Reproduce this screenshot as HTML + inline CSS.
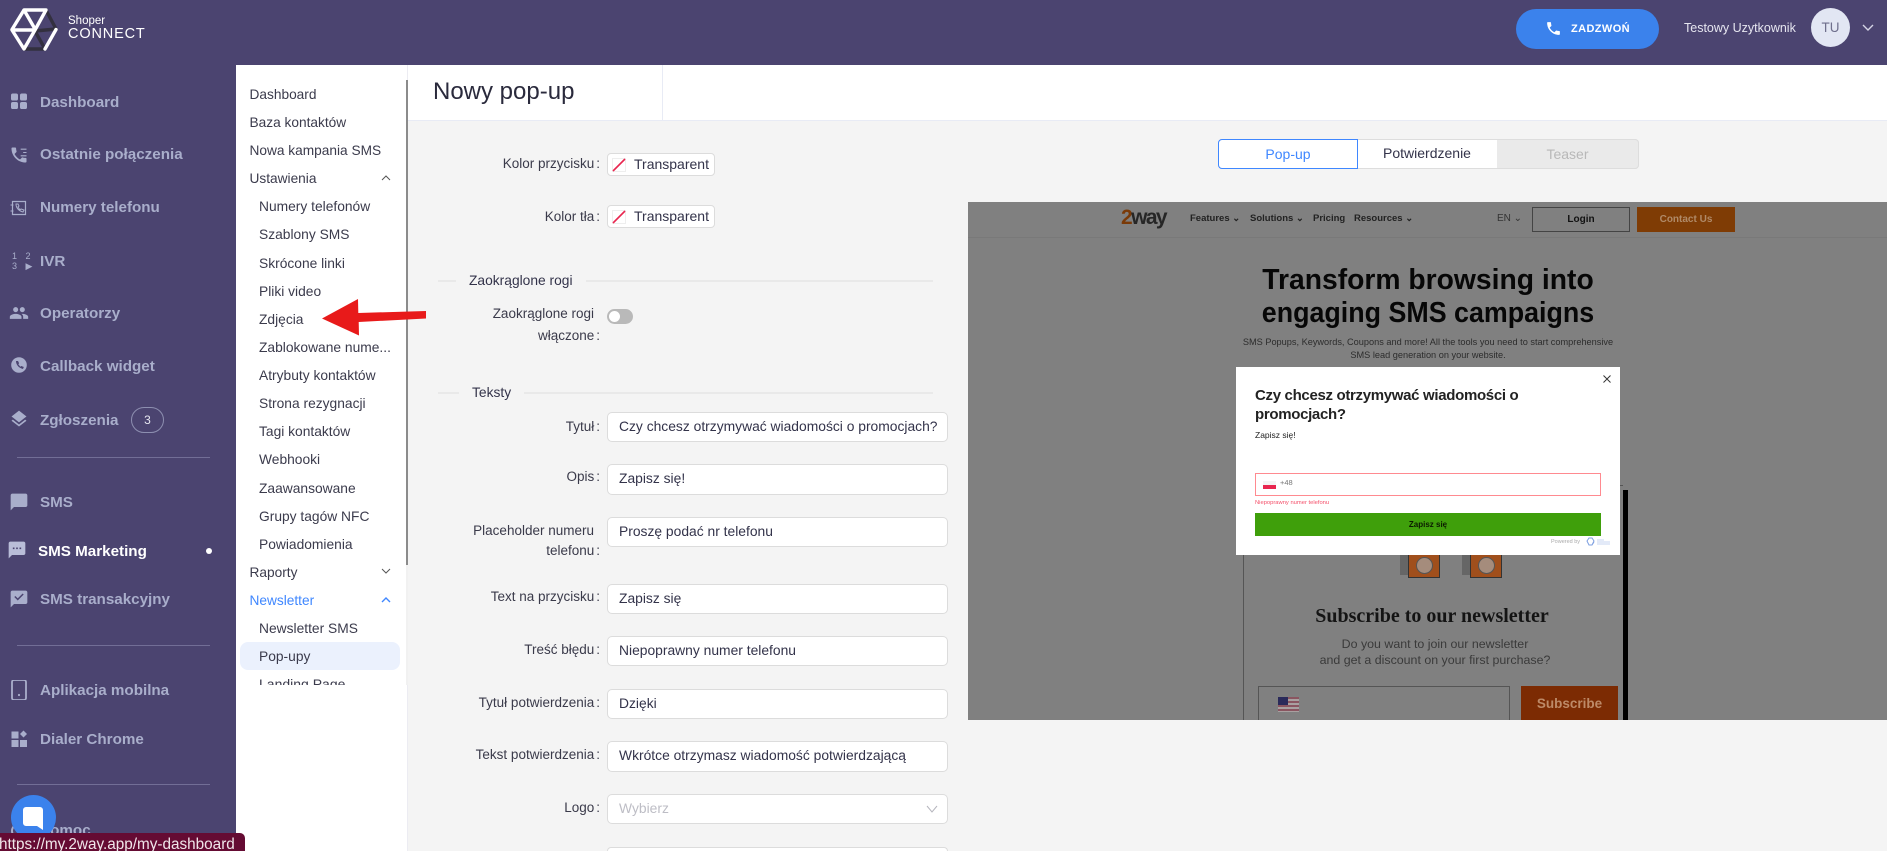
<!DOCTYPE html>
<html lang="pl"><head><meta charset="utf-8"><title>Nowy pop-up</title>
<style>
*{box-sizing:border-box}
html,body{margin:0;padding:0;width:1887px;height:851px;overflow:hidden}
body{position:relative;background:#f4f4f4;font-family:"Liberation Sans",Arial,sans-serif;color:#33334a}
.a,.t,.n,.m,.s,.l,.i,.p,svg{position:absolute}
.t{line-height:20px;height:20px;white-space:nowrap}
.n{left:40px;line-height:20px;height:20px;font-size:15.2px;font-weight:700;color:#a9aecb;white-space:nowrap}
.ic{left:9px;width:20px;height:20px;fill:#a9aecb}
.m{left:249.5px;line-height:20px;height:20px;font-size:13.7px;color:#3b3b4c;white-space:nowrap;margin-top:1px}
.s{left:259px;line-height:20px;height:20px;font-size:13.8px;color:#3b3b4c;white-space:nowrap;margin-top:1px}
.l{right:1287px;line-height:20px;height:20px;font-size:13.5px;color:#3a3a4a;white-space:nowrap;text-align:right;margin-top:1px}
.l b{font-weight:400;margin-left:2px}
.i{left:607px;width:341px;background:#fff;border:1px solid #dcdcdc;border-radius:5px;font-size:13.85px;line-height:27px;padding-left:11px;color:#33334a;white-space:nowrap}
.p{left:607px;width:108px;height:23px;background:#fff;border:1px solid #dcdcdc;border-radius:4px;font-size:14px;line-height:21px;padding-left:26px;color:#33334a}
.d{position:absolute;height:2px;background:#e9e9e9}
.g{position:absolute;white-space:nowrap;line-height:1;text-align:center}
</style></head><body>

<!-- preview -->
<div class="a" style="left:968px;top:202px;width:919px;height:518px;background:#808080;overflow:hidden"></div>
<div class="a" style="left:968px;top:237px;width:919px;height:1px;background:#797979"></div>
<div class="t" style="left:1121px;top:208px;font-size:21px;font-weight:700;color:#262626;letter-spacing:-1.6px"><span style="color:#7a3a08">2</span>way</div>
<div class="t" style="left:1190px;top:209px;font-size:9.5px;font-weight:700;color:#222">Features ⌄</div>
<div class="t" style="left:1250px;top:209px;font-size:9.5px;font-weight:700;color:#222">Solutions ⌄</div>
<div class="t" style="left:1313px;top:209px;font-size:9.5px;font-weight:700;color:#222">Pricing</div>
<div class="t" style="left:1354px;top:209px;font-size:9.5px;font-weight:700;color:#222">Resources ⌄</div>
<div class="t" style="left:1497px;top:209px;font-size:10px;color:#333">EN ⌄</div>
<div class="a" style="left:1532px;top:207px;width:98px;height:25px;border:1px solid #444;font-size:10px;font-weight:700;color:#111;text-align:center;line-height:23px">Login</div>
<div class="a" style="left:1637px;top:207px;width:98px;height:25px;background:#7f3c05;font-size:10px;font-weight:700;color:#b08a68;text-align:center;line-height:25px">Contact Us</div>
<div class="g" style="left:1228px;width:400px;top:266px;font-size:29px;font-weight:700;color:#070707;transform:scaleX(.975)">Transform browsing into</div>
<div class="g" style="left:1228px;width:400px;top:299px;font-size:29px;font-weight:700;color:#070707;transform:scaleX(.925)">engaging SMS campaigns</div>
<div class="g" style="left:1228px;width:400px;top:338px;font-size:9.2px;color:#2c2c2c">SMS Popups, Keywords, Coupons and more! All the tools you need to start comprehensive</div>
<div class="g" style="left:1228px;width:400px;top:351px;font-size:9.2px;color:#2c2c2c">SMS lead generation on your website.</div>

<div class="a" style="left:1243px;top:485px;width:380px;height:235px;border:1px solid #555;border-width:1px 0 0 1px"></div>
<div class="a" style="left:1623px;top:490px;width:5px;height:230px;background:#000"></div>
<div class="a" style="left:1400px;top:550px;width:9px;height:25px;background:#666"></div>
<div class="a" style="left:1408px;top:550px;width:32px;height:28px;background:#a04f1c;border:1px solid #333"></div>
<div class="a" style="left:1416px;top:557px;width:17px;height:17px;border-radius:50%;background:#a58c7c;border:1px solid #555"></div>
<div class="a" style="left:1462px;top:550px;width:9px;height:25px;background:#666"></div>
<div class="a" style="left:1470px;top:550px;width:32px;height:28px;background:#a04f1c;border:1px solid #333"></div>
<div class="a" style="left:1478px;top:557px;width:17px;height:17px;border-radius:50%;background:#a58c7c;border:1px solid #555"></div>
<div class="g" style="left:1282px;width:300px;top:606px;font-size:20px;font-weight:700;color:#141414;font-family:'Liberation Serif',serif">Subscribe to our newsletter</div>
<div class="g" style="left:1285px;width:300px;top:638px;font-size:12.4px;color:#3a3a3a">Do you want to join our newsletter</div>
<div class="g" style="left:1285px;width:300px;top:654px;font-size:12.4px;color:#3a3a3a">and get a discount on your first purchase?</div>
<div class="a" style="left:1258px;top:686px;width:252px;height:34px;border:1px solid #555;border-bottom:0"></div>
<div class="a" style="left:1278px;top:697px;width:21px;height:15px;background:repeating-linear-gradient(#8a5560 0 2px,#a8a0a0 2px 4px)"></div>
<div class="a" style="left:1278px;top:697px;width:10px;height:8px;background:#2a2a5a"></div>
<div class="a" style="left:1521px;top:686px;width:97px;height:34px;background:#7c2b03;color:#bd8a68;font-size:13.5px;font-weight:700;text-align:center;line-height:36px">Subscribe</div>

<!-- popup -->
<div class="a" style="left:1236px;top:367px;width:384px;height:188px;background:#fff"></div>
<svg style="left:1601px;top:373px" width="12" height="12" viewBox="0 0 12 12"><path d="M2.500 2.500l7 7M9.500 2.500l-7 7" stroke="#333" stroke-width="1" fill="none"/></svg>
<div class="t" style="left:1255px;top:386px;font-size:15px;font-weight:700;color:#222;letter-spacing:-.32px">Czy chcesz otrzymywać wiadomości o</div>
<div class="t" style="left:1255px;top:405px;font-size:15px;font-weight:700;color:#222;letter-spacing:-.32px">promocjach?</div>
<div class="t" style="left:1255px;top:425px;font-size:8.5px;color:#222">Zapisz się!</div>
<div class="a" style="left:1255px;top:473px;width:346px;height:23px;border:1px solid #ff8a90;background:#fff"></div>
<div class="a" style="left:1263px;top:481px;width:13px;height:4px;background:#f4f4f4"></div>
<div class="a" style="left:1263px;top:485px;width:13px;height:4px;background:#e8264f"></div>
<div class="t" style="left:1280px;top:473px;font-size:7.5px;color:#777">+48</div>
<div class="t" style="left:1255px;top:493px;font-size:5.8px;color:#f4506a">Niepoprawny numer telefonu</div>
<div class="a" style="left:1255px;top:513px;width:346px;height:23px;background:#3f9f0b;font-size:8px;font-weight:700;color:#0b1a00;text-align:center;line-height:23px">Zapisz się</div>
<div class="t" style="left:1551px;top:532px;font-size:5.5px;color:#aaa">Powered by</div>
<svg style="left:1586px;top:537px" width="26" height="10" viewBox="0 0 26 10"><path d="M1 4l2-3h3l2 3-2 4H3zM6 8l2-3" stroke="#7d9fe0" fill="none"/><path d="M11 3h7M11 5h13M11 7h13" stroke="#b5c8ee" stroke-width=".8"/></svg>

<!-- form -->
<div class="a" style="left:408px;top:65px;width:1479px;height:56px;background:#fff;border-bottom:1px solid #e8ebf5"></div>
<div class="a" style="left:662px;top:65px;width:1px;height:55px;background:#e8ebf5"></div>
<div class="t" style="left:433px;top:82px;font-size:24px;color:#2a2a3c">Nowy pop-up</div>

<div class="a" style="left:1218px;top:139px;width:421px;height:30px;background:#fff;border:1px solid #ddd;border-radius:4px"></div>
<div class="a" style="left:1497px;top:139px;width:142px;height:30px;background:#eaeaea;border:1px solid #ddd;border-left:0;border-radius:0 4px 4px 0;text-align:center;font-size:14px;line-height:28px;color:#b8b8b8">Teaser</div>
<div class="a" style="left:1357px;top:139px;width:140px;height:30px;text-align:center;font-size:14px;line-height:29px;color:#33334a">Potwierdzenie</div>
<div class="a" style="left:1218px;top:139px;width:140px;height:30px;background:#fff;border:1px solid #3f87ff;border-radius:4px 0 0 4px;text-align:center;font-size:14px;line-height:28px;color:#3f87ff">Pop-up</div>

<div class="l" style="top:153px">Kolor przycisku<b>:</b></div>
<div class="p" style="top:153px">Transparent</div>
<div class="a" style="left:612px;top:158px;width:14px;height:14px;background:#fff;border:1px solid #eee"></div>
<svg style="left:612px;top:158px" width="14" height="14"><path d="M1 13L13 1" stroke="#e8264f" stroke-width="1.600"/></svg>
<div class="l" style="top:206px">Kolor tła<b>:</b></div>
<div class="p" style="top:205px">Transparent</div>
<div class="a" style="left:612px;top:210px;width:14px;height:14px;background:#fff;border:1px solid #eee"></div>
<svg style="left:612px;top:210px" width="14" height="14"><path d="M1 13L13 1" stroke="#e8264f" stroke-width="1.600"/></svg>

<div class="d" style="left:438px;top:280px;width:18px"></div>
<div class="t" style="left:469px;top:271px;font-size:13.8px;color:#33334a">Zaokrąglone rogi</div>
<div class="d" style="left:586px;top:280px;width:347px"></div>
<div class="l" style="top:303px;right:1293px">Zaokrąglone rogi</div>
<div class="l" style="top:325px">włączone<b>:</b></div>
<div class="a" style="left:607px;top:309px;width:26px;height:15px;border-radius:8px;background:#b9b9b9"></div>
<div class="a" style="left:609px;top:311px;width:11px;height:11px;border-radius:50%;background:#fff"></div>

<div class="d" style="left:438px;top:392px;width:21px"></div>
<div class="t" style="left:472px;top:383px;font-size:13.8px;color:#33334a">Teksty</div>
<div class="d" style="left:524px;top:392px;width:409px"></div>

<div class="l" style="top:416px">Tytuł<b>:</b></div>
<div class="i" style="top:412px;height:30px">Czy chcesz otrzymywać wiadomości o promocjach?</div>
<div class="l" style="top:466px">Opis<b>:</b></div>
<div class="i" style="top:464px;height:31px">Zapisz się!</div>
<div class="l" style="top:520px;right:1293px">Placeholder numeru</div>
<div class="l" style="top:540px">telefonu<b>:</b></div>
<div class="i" style="top:517px;height:30px">Proszę podać nr telefonu</div>
<div class="l" style="top:586px">Text na przycisku<b>:</b></div>
<div class="i" style="top:584px;height:30px">Zapisz się</div>
<div class="l" style="top:639px">Treść błędu<b>:</b></div>
<div class="i" style="top:636px;height:30px">Niepoprawny numer telefonu</div>
<div class="l" style="top:692px">Tytuł potwierdzenia<b>:</b></div>
<div class="i" style="top:689px;height:30px">Dzięki</div>
<div class="l" style="top:744px">Tekst potwierdzenia<b>:</b></div>
<div class="i" style="top:741px;height:31px">Wkrótce otrzymasz wiadomość potwierdzającą</div>
<div class="l" style="top:797px">Logo<b>:</b></div>
<div class="i" style="top:794px;height:30px;color:#bdbdc5">Wybierz</div>
<svg style="left:925px;top:802px" width="14" height="14" viewBox="0 0 14 14"><path d="M2 4l5 6 5-6" stroke="#b5b5bd" fill="none"/></svg>
<div class="a" style="left:607px;top:847px;width:341px;height:4px;background:#fff;border:1px solid #dcdcdc;border-bottom:0;border-radius:5px 5px 0 0"></div>

<!-- header + sidebar -->
<div class="a" style="left:0;top:0;width:1887px;height:65px;background:#4b4470"></div>
<div class="a" style="left:0;top:0;width:236px;height:851px;background:#4b4470"></div>

<svg style="left:8px;top:6px" width="54" height="46" viewBox="8 6 54 46" fill="none" stroke-linecap="round">
<path d="M46 10l10 19M35 31l10 18M35 31l21-2M24 49h21" stroke="#33303f" stroke-width="3.400"/>
<path d="M12 29.500L24 10h22L35 30H12l12 19 11-19M24 10l11 19M56 29.500L45 49" stroke="#fff" stroke-width="3.400" stroke-linejoin="round"/>
</svg>
<div class="t" style="left:68px;top:11px;font-size:11.500px;color:#fff">Shoper</div>
<div class="t" style="left:68px;top:24px;font-size:14.500px;color:#fff;letter-spacing:.85px">CONNECT</div>

<div class="a" style="left:1516px;top:9px;width:143px;height:40px;border-radius:20px;background:#3b82ec"></div>
<svg style="left:1545px;top:20px" width="17" height="17" viewBox="0 0 24 24" fill="#fff"><path d="M6.620 10.790c1.440 2.830 3.760 5.140 6.590 6.590l2.200-2.200c.27-.27.67-.36 1.020-.24 1.120.37 2.330.57 3.570.57.55 0 1 .45 1 1V20c0 .55-.45 1-1 1-9.390 0-17-7.610-17-17 0-.55.45-1 1-1h3.500c.55 0 1 .45 1 1 0 1.250.2 2.450.57 3.570.11.35.03.74-.25 1.020l-2.200 2.200z"/></svg>
<div class="t" style="left:1571px;top:19px;font-size:11px;font-weight:700;color:#fff;letter-spacing:.4px">ZADZWOŃ</div>
<div class="t" style="left:1684px;top:18px;font-size:12.500px;color:#e6e6f0">Testowy Uzytkownik</div>
<div class="a" style="left:1811px;top:8px;width:39px;height:39px;border-radius:50%;background:#e2e6f3;text-align:center;line-height:39px;font-size:13.500px;color:#6f6f8c">TU</div>
<svg style="left:1861px;top:23px" width="14" height="10" viewBox="0 0 14 10"><path d="M2 2l5 5 5-5" stroke="#d5d5e5" stroke-width="1.400" fill="none"/></svg>

<svg class="ic" style="top:91px" viewBox="0 0 20 20"><rect x="2" y="2.500" width="7" height="7" rx="1.800"/><rect x="11" y="2.500" width="7" height="7" rx="1.800"/><rect x="2" y="11" width="7" height="7" rx="1.800"/><rect x="11" y="11" width="7" height="7" rx="1.800"/></svg>
<div class="n" style="top:93px">Dashboard</div>
<svg class="ic" style="top:145px" viewBox="0 0 24 24"><path d="M6.620 10.790c1.440 2.830 3.760 5.140 6.590 6.590l2.200-2.200c.27-.27.67-.36 1.020-.24 1.120.37 2.330.57 3.570.57.55 0 1 .45 1 1V20c0 .55-.45 1-1 1-9.390 0-17-7.610-17-17 0-.55.45-1 1-1h3.500c.55 0 1 .45 1 1 0 1.250.2 2.450.57 3.570.11.35.03.74-.25 1.020l-2.200 2.200z"/><path d="M14 5h7M17 9h4M14 13h7" stroke="#a9aecb" stroke-width="1.300"/></svg>
<div class="n" style="top:145px">Ostatnie połączenia</div>
<svg class="ic" style="top:198px" viewBox="0 0 20 20"><path d="M3.500 3.500h13v13h-13z" fill="none" stroke="#a9aecb" stroke-width="1.200"/><path d="M1.500 7h3M1.500 13h3" stroke="#a9aecb"/><path d="M7 6c0 4 3 7 7 8l1-2-3-1-1 1-2-3 1-1-1-2z" fill="none" stroke="#a9aecb"/></svg>
<div class="n" style="top:198px">Numery telefonu</div>
<div class="t" style="left:12px;top:251px;font-size:9px;color:#a9aecb;letter-spacing:3px;line-height:10px;height:22px">1 2<br>3 ▶</div>
<div class="n" style="top:252px">IVR</div>
<svg class="ic" style="top:303px" viewBox="0 0 24 24"><path d="M16 11c1.660 0 2.990-1.340 2.990-3S17.660 5 16 5c-1.660 0-3 1.340-3 3s1.340 3 3 3zm-8 0c1.660 0 2.990-1.340 2.990-3S9.660 5 8 5C6.340 5 5 6.340 5 8s1.340 3 3 3zm0 2c-2.330 0-7 1.170-7 3.500V19h14v-2.500c0-2.330-4.670-3.500-7-3.500zm8 0c-.29 0-.62.02-.97.05 1.160.84 1.970 1.970 1.970 3.450V19h6v-2.500c0-2.330-4.670-3.500-7-3.500z"/></svg>
<div class="n" style="top:304px">Operatorzy</div>
<svg class="ic" style="top:355px" viewBox="0 0 20 20"><circle cx="10" cy="10" r="7.800"/><path d="M7 6c0 4 3 7 7 8l.8-2-2.500-1-1 .8-2-2.500.8-1L9 6z" fill="#4b4470"/></svg>
<div class="n" style="top:357px">Callback widget</div>
<svg class="ic" style="top:409px" viewBox="0 0 24 24"><path d="M11.990 18.540l-7.370-5.730L3 14.070l9 7 9-7-1.630-1.270-7.380 5.740zM12 16l7.360-5.730L21 9l-9-7-9 7 1.630 1.270L12 16z"/></svg>
<div class="n" style="top:411px">Zgłoszenia</div>
<div class="a" style="left:131px;top:407px;width:33px;height:26px;border:1px solid #8d8fb0;border-radius:13px;text-align:center;line-height:24px;font-size:12px;color:#e6e6f0">3</div>
<div class="a" style="left:17px;top:457px;width:193px;height:1px;background:#726e96"></div>

<svg class="ic" style="top:492px" viewBox="0 0 24 24"><path d="M20 2H4c-1.100 0-2 .9-2 2v18l4-4h14c1.100 0 2-.9 2-2V4c0-1.100-.9-2-2-2z"/></svg>
<div class="n" style="top:493px">SMS</div>
<svg class="ic" style="top:540px;left:7px;fill:#b9bdd8" viewBox="0 0 24 24"><path d="M20 2H4c-1.100 0-2 .9-2 2v18l4-4h14c1.100 0 2-.9 2-2V4c0-1.100-.9-2-2-2zM9 11H7V9h2v2zm4 0h-2V9h2v2zm4 0h-2V9h2v2z"/></svg>
<div class="n" style="top:542px;left:38px;color:#fff">SMS Marketing</div>
<div class="a" style="left:206px;top:548px;width:6px;height:6px;border-radius:50%;background:#fff"></div>
<svg class="ic" style="top:589px" viewBox="0 0 24 24"><path d="M20 2H4c-1.100 0-2 .9-2 2v18l4-4h14c1.100 0 2-.9 2-2V4c0-1.100-.9-2-2-2z"/><path d="M7 9l3.500 3.500L17 6" fill="none" stroke="#4b4470" stroke-width="1.800"/></svg>
<div class="n" style="top:590px">SMS transakcyjny</div>
<div class="a" style="left:17px;top:645px;width:193px;height:1px;background:#726e96"></div>

<svg class="ic" style="top:680px" viewBox="0 0 20 20"><rect x="3" y="0" width="14" height="20" rx="2" fill="none" stroke="#a9aecb" stroke-width="1.800"/><circle cx="10" cy="15" r="1.100"/></svg>
<div class="n" style="top:681px">Aplikacja mobilna</div>
<svg class="ic" style="top:729px" viewBox="0 0 20 20"><rect x="2.500" y="2.500" width="7" height="7"/><rect x="2.500" y="11" width="7" height="7"/><rect x="11" y="11" width="7" height="7"/><path d="M14.500 1.500l3.500 3.500-3.500 3.500L11 5z"/></svg>
<div class="n" style="top:730px">Dialer Chrome</div>
<div class="a" style="left:17px;top:784px;width:193px;height:1px;background:#726e96"></div>
<div class="n" style="top:821px;left:40px">Pomoc</div>
<div class="a" style="left:11px;top:823px;width:16px;height:16px;border:2px solid #a9aecb;border-radius:50%"></div>

<!-- secondary menu -->
<div class="a" style="left:236px;top:65px;width:172px;height:786px;background:#fff;border-right:1px solid #ececf2"></div>
<div class="a" style="left:406px;top:80px;width:2px;height:485px;background:#8b8b8b"></div>
<div class="a" style="left:406px;top:565px;width:2px;height:120px;background:#f1f1f1"></div>
<div class="a" style="left:240px;top:642px;width:160px;height:28px;border-radius:8px;background:#ebf1fd"></div>
<div class="m" style="top:84px">Dashboard</div>
<div class="m" style="top:112px">Baza kontaktów</div>
<div class="m" style="top:140px">Nowa kampania SMS</div>
<div class="m" style="top:168px">Ustawienia</div>
<svg style="left:381px;top:174px" width="10" height="8" viewBox="0 0 10 8"><path d="M1 6l4-4 4 4" stroke="#555" fill="none"/></svg>
<div class="s" style="top:196px">Numery telefonów</div>
<div class="s" style="top:224px">Szablony SMS</div>
<div class="s" style="top:253px">Skrócone linki</div>
<div class="s" style="top:281px">Pliki video</div>
<div class="s" style="top:309px">Zdjęcia</div>
<div class="s" style="top:337px">Zablokowane nume...</div>
<div class="s" style="top:365px">Atrybuty kontaktów</div>
<div class="s" style="top:393px">Strona rezygnacji</div>
<div class="s" style="top:421px">Tagi kontaktów</div>
<div class="s" style="top:449px">Webhooki</div>
<div class="s" style="top:478px">Zaawansowane</div>
<div class="s" style="top:506px">Grupy tagów NFC</div>
<div class="s" style="top:534px">Powiadomienia</div>
<div class="m" style="top:562px">Raporty</div>
<svg style="left:381px;top:567px" width="10" height="8" viewBox="0 0 10 8"><path d="M1 2l4 4 4-4" stroke="#555" fill="none"/></svg>
<div class="m" style="top:590px;color:#3f87ff">Newsletter</div>
<svg style="left:381px;top:596px" width="10" height="8" viewBox="0 0 10 8"><path d="M1 6l4-4 4 4" stroke="#3f87ff" stroke-width="1.400" fill="none"/></svg>
<div class="s" style="top:618px">Newsletter SMS</div>
<div class="s" style="top:646px">Pop-upy</div>
<div class="a" style="left:236px;top:674px;width:170px;height:11px;overflow:hidden"><div class="t" style="left:23px;top:0;font-size:14px;color:#3b3b4c">Landing Page</div></div>

<!-- arrow -->
<svg style="left:318px;top:294px" width="112" height="46" viewBox="318 294 112 46"><path d="M322 318.500L358 299l.3 14 67.700-2v7.500l-67.300 3.500.3 13.500z" fill="#e81a1a"/></svg>

<!-- chat + status -->
<div class="a" style="left:11px;top:795px;width:45px;height:45px;border-radius:50%;background:#3b82ec"></div>
<svg style="left:23px;top:807px" width="20" height="24" viewBox="0 0 20 24"><path d="M3 0h14a3 3 0 0 1 3 3v20l-6-4H3a3 3 0 0 1-3-3V3a3 3 0 0 1 3-3z" fill="#fff"/></svg>
<div class="a" style="left:0;top:833px;width:245px;height:18px;background:#650b33;border-radius:0 5px 0 0;overflow:hidden;color:#f0e6ea;font-size:15.300px;line-height:24px;white-space:nowrap;text-indent:-1px">https://my.2way.app/my-dashboard</div>
</body></html>
